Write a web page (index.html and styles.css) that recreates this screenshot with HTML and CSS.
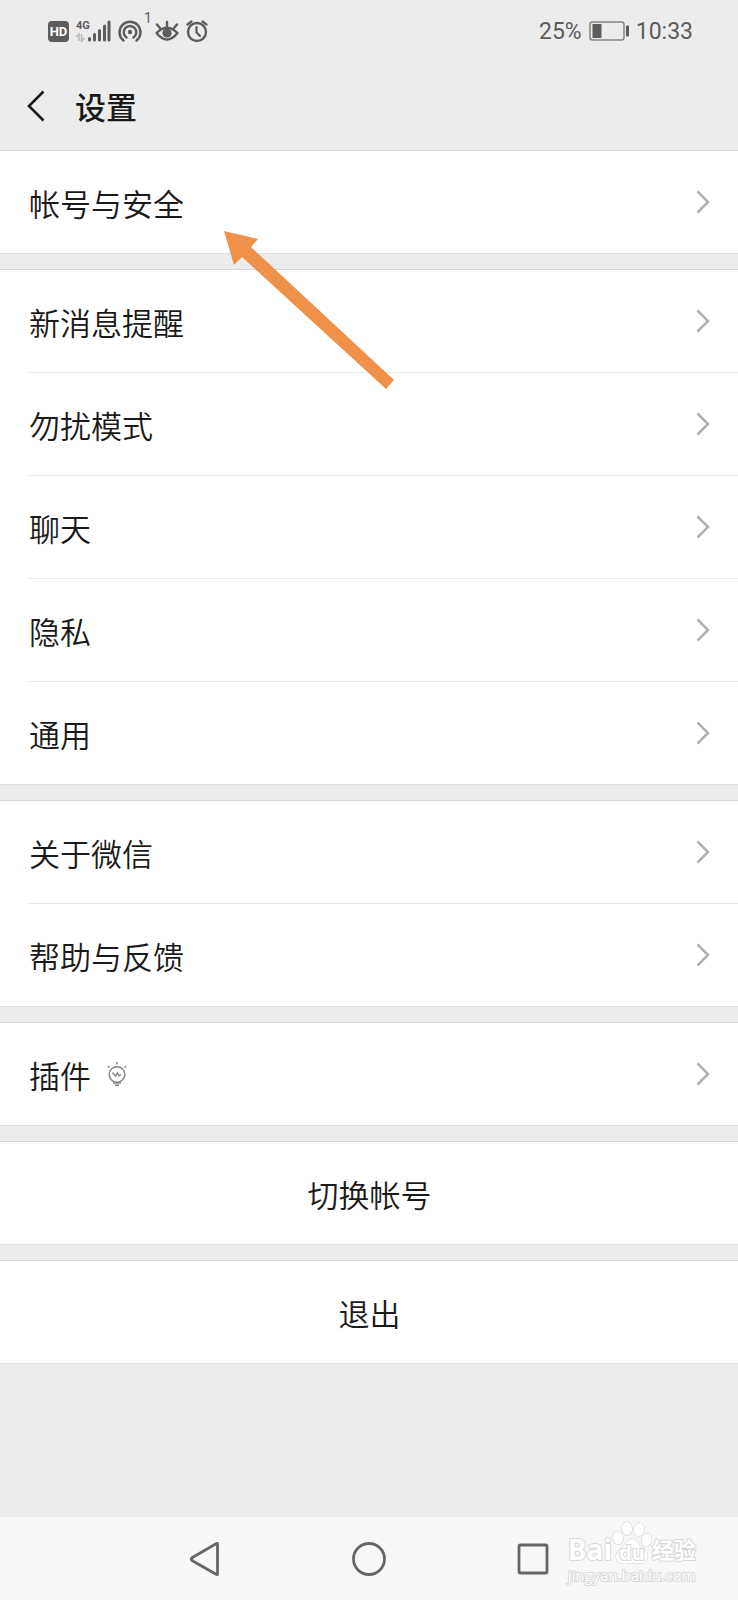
FILE: index.html
```html
<!DOCTYPE html>
<html lang="zh-CN">
<head>
  <meta charset="UTF-8">
  <meta name="viewport" content="width=device-width, initial-scale=1">
  <title>设置</title>
  <link rel="stylesheet" href="styles.css">
</head>
<body>
  <svg class="defs" aria-hidden="true">
    <symbol id="chevron" viewBox="0 0 14 24">
      <path d="M1.5 1.5 L12 12 L1.5 22.5" fill="none" stroke="#b0b0b0" stroke-width="2.5"/>
    </symbol>
  </svg>

  <div class="status-bar">
    <div class="status-left">
      <svg width="166" height="34" viewBox="0 0 166 34" aria-hidden="true">
        <!-- HD badge -->
        <rect x="0" y="11" width="21" height="21" rx="4" fill="#5c5c5c"/>
        <text class="hd" x="10.5" y="26" text-anchor="middle">HD</text>
        <!-- signal -->
        <text class="net" x="28" y="19">4G</text>
        <path d="M28 27 L31 24 V31 M33.5 24 V31 L36.5 28" fill="none" stroke="#b8b8b8" stroke-width="1.5"/>
        <path d="M41.5 28.5 V30 M46.5 24.5 V30 M51.5 20.5 V30 M56.5 16 V30 M61 12 V30" stroke="#5c5c5c" stroke-width="3" stroke-linecap="round"/>
        <!-- hotspot -->
        <circle cx="82" cy="22" r="2.2" fill="#5c5c5c"/>
        <path d="M78.5 27.5 A6.3 6.3 0 1 1 85.5 27.5 M75.5 30.5 A10.5 10.5 0 1 1 88.5 30.5" fill="none" stroke="#5c5c5c" stroke-width="2.4" stroke-linecap="round"/>
        <text class="count" x="96" y="13">1</text>
        <!-- eye -->
        <path d="M108.5 23 Q119 12.5 129.5 23 Q119 36 108.5 23 Z" fill="none" stroke="#5c5c5c" stroke-width="2.4" stroke-linejoin="round"/>
        <circle cx="119" cy="23" r="4.6" fill="#5c5c5c"/>
        <path d="M109 14.5 L112 18 M119 12 V16 M129 14.5 L126 18" stroke="#5c5c5c" stroke-width="2.4" stroke-linecap="round"/>
        <!-- alarm -->
        <circle cx="149" cy="22" r="9" fill="none" stroke="#5c5c5c" stroke-width="2.4"/>
        <path d="M148.5 17 V22.5 L152 26 M139.5 14.5 L143.5 11.5 M158.5 14.5 L154.5 11.5" fill="none" stroke="#5c5c5c" stroke-width="2.2" stroke-linecap="round"/>
      </svg>
    </div>
    <div class="status-right">
      <span>25%</span>
      <svg width="40" height="20" viewBox="0 0 40 20" aria-hidden="true">
        <rect x="1" y="1" width="34" height="18" rx="2.5" fill="none" stroke="#858585" stroke-width="1.5"/>
        <rect x="3.5" y="3" width="9" height="14" fill="#5c5c5c"/>
        <rect x="37" y="4.5" width="3" height="11" rx="1" fill="#5c5c5c"/>
      </svg>
      <span>10:33</span>
    </div>
  </div>

  <header class="title-bar">
    <button class="back" type="button" aria-label="返回">
      <svg width="18" height="32" viewBox="0 0 18 32"><path d="M16.5 1.5 L2 16 L16.5 30.5" fill="none" stroke="#1a1a1a" stroke-width="2.6"/></svg>
    </button>
    <h1>设置</h1>
  </header>

  <main class="settings">
    <ul class="group">
      <li><a class="row" href="#account">帐号与安全<svg class="chevron"><use href="#chevron"/></svg></a></li>
    </ul>
    <ul class="group">
      <li><a class="row" href="#notify">新消息提醒<svg class="chevron"><use href="#chevron"/></svg></a></li>
      <li><a class="row" href="#dnd">勿扰模式<svg class="chevron"><use href="#chevron"/></svg></a></li>
      <li><a class="row" href="#chat">聊天<svg class="chevron"><use href="#chevron"/></svg></a></li>
      <li><a class="row" href="#privacy">隐私<svg class="chevron"><use href="#chevron"/></svg></a></li>
      <li><a class="row" href="#general">通用<svg class="chevron"><use href="#chevron"/></svg></a></li>
    </ul>
    <ul class="group">
      <li><a class="row" href="#about">关于微信<svg class="chevron"><use href="#chevron"/></svg></a></li>
      <li><a class="row" href="#help">帮助与反馈<svg class="chevron"><use href="#chevron"/></svg></a></li>
    </ul>
    <ul class="group">
      <li>
        <a class="row" href="#plugins">插件
          <svg class="bulb" width="20" height="24" viewBox="0 0 20 24" aria-hidden="true">
            <g fill="none" stroke="#858585" stroke-width="1.4">
              <circle cx="10" cy="12.5" r="7.8"/>
              <path d="M6 21 H14 M8 23.3 H12"/>
              <path d="M5.5 10.5 L8.5 14 L10.5 11 L12 14 L14 12.5 M10 0 V2.5 M1 4 L2.5 5.5 M19 4 L17.5 5.5"/>
            </g>
          </svg>
          <svg class="chevron"><use href="#chevron"/></svg>
        </a>
      </li>
    </ul>
    <div class="group"><button class="row action" type="button">切换帐号</button></div>
    <div class="group"><button class="row action" type="button">退出</button></div>

    <svg class="pointer" width="172" height="159" viewBox="0 0 172 159" aria-hidden="true">
      <path d="M0 0 L34 8 L27 16 L170 149 L162 158 L18 26 L10 34 Z" fill="#f0914a"/>
    </svg>
  </main>

  <nav class="nav-bar">
    <button type="button" aria-label="后退">
      <svg width="34" height="36" viewBox="0 0 34 36"><path d="M29.5 3 V33 Q29.5 34 28.5 33.5 L4 19.5 Q2.5 18 4 16.7 L28.5 2.5 Q29.5 2 29.5 3 Z" fill="none" stroke="#666" stroke-width="2.8" stroke-linejoin="round"/></svg>
    </button>
    <button type="button" aria-label="主页">
      <svg width="34" height="36" viewBox="0 0 34 36"><circle cx="17" cy="18" r="15.5" fill="none" stroke="#666" stroke-width="2.8"/></svg>
    </button>
    <button type="button" aria-label="最近任务">
      <svg width="34" height="36" viewBox="0 0 34 36"><rect x="3" y="4" width="28" height="28" rx="1.5" fill="none" stroke="#666" stroke-width="2.8"/></svg>
    </button>
    <div class="watermark">
      <div class="brand">
        <span>Bai</span>
        <span class="paw">
          <svg width="40" height="44" viewBox="0 0 40 44" aria-hidden="true">
            <g fill="#fff" stroke="#d8d8d8" stroke-width="1.4">
              <ellipse cx="6" cy="17" rx="5" ry="6.5" transform="rotate(-12 6 17)"/>
              <ellipse cx="15" cy="7.5" rx="5" ry="6.5"/>
              <ellipse cx="27" cy="8.5" rx="5" ry="6.5" transform="rotate(10 27 8.5)"/>
              <ellipse cx="34.5" cy="19" rx="5" ry="6.5" transform="rotate(12 34.5 19)"/>
              <path d="M20 18 C24 18 26 22 29 26 C33 29 37 33 35 38 C33 44 26 42 20 42 C14 42 8 44 5 39 C2 33 7 29 11 26 C14 22 16 18 20 18 Z"/>
            </g>
          </svg>
          <span class="du">du</span>
        </span>
        <span class="cn">经验</span>
      </div>
      <div class="site">jingyan.baidu.com</div>
    </div>
  </nav>
</body>
</html>
```
FILE: styles.css
```css
* {
  box-sizing: border-box;
}

body {
  margin: 0;
  min-height: 100vh;
  display: flex;
  flex-direction: column;
  background: #ececec;
  color: #1a1a1a;
  font-family: "Noto Sans CJK SC", sans-serif;
}

button {
  padding: 0;
  border: none;
  background: none;
  color: inherit;
  font: inherit;
  cursor: pointer;
}

svg {
  display: block;
}

.defs {
  position: absolute;
  width: 0;
  height: 0;
}

/* status bar */
.status-bar {
  display: flex;
  justify-content: space-between;
  height: 62px;
  padding: 0 45px 0 48px;
  color: #5c5c5c;
  font-family: Roboto, sans-serif;
}

.status-left {
  padding-top: 10px;
}

.status-right {
  display: flex;
  align-items: center;
  gap: 7px;
  font-size: 23px;
}

.hd {
  fill: #fff;
  font-size: 13px;
  font-weight: bold;
}

.net {
  fill: #5c5c5c;
  font-size: 11px;
  font-weight: bold;
}

.count {
  fill: #5c5c5c;
  font-size: 14px;
}

/* title bar */
.title-bar {
  display: flex;
  align-items: center;
  gap: 30px;
  height: 88px;
  padding-left: 27px;
}

.title-bar h1 {
  margin: 0;
  font-size: 31px;
  font-weight: 500;
  line-height: 40px;
}

/* list */
.settings {
  position: relative;
  display: flex;
  flex-direction: column;
  gap: 15px;
}

.group {
  margin: 0;
  padding: 0;
  list-style: none;
  background: #fff;
  border-top: 1px solid #d6d6d6;
  border-bottom: 1px solid #dedede;
}

.group li + li::before {
  content: "";
  display: block;
  height: 1px;
  margin-left: 29px;
  background: #e6e6e6;
}

.row {
  display: flex;
  align-items: center;
  width: 100%;
  height: 102px;
  padding: 0 28px 0 29px;
  color: inherit;
  font-size: 31px;
  font-weight: 350;
  text-decoration: none;
}

.action {
  justify-content: center;
}

.chevron {
  width: 14px;
  height: 24px;
  margin-left: auto;
}

.bulb {
  margin-left: 16px;
}

.pointer {
  position: absolute;
  top: 81px;
  left: 224px;
}

/* system navigation */
.nav-bar {
  position: relative;
  display: flex;
  justify-content: center;
  align-items: center;
  gap: 130px;
  height: 83px;
  margin-top: auto;
  background: #f7f7f7;
}

.watermark {
  position: absolute;
  right: 42px;
  bottom: 15px;
  color: #fff;
  font-family: "Open Sans", "Noto Sans CJK SC", sans-serif;
  -webkit-text-stroke: 2px #d8d8d8;
  paint-order: stroke fill;
}

.brand {
  display: flex;
  align-items: flex-end;
  font-size: 28px;
  font-weight: bold;
  line-height: 32px;
}

.paw {
  position: relative;
}

.du {
  position: absolute;
  left: 0;
  right: 0;
  bottom: 0;
  font-size: 20px;
  line-height: 24px;
  text-align: center;
}

.cn {
  font-size: 22px;
}

.site {
  font-size: 15px;
  line-height: 20px;
}
```
